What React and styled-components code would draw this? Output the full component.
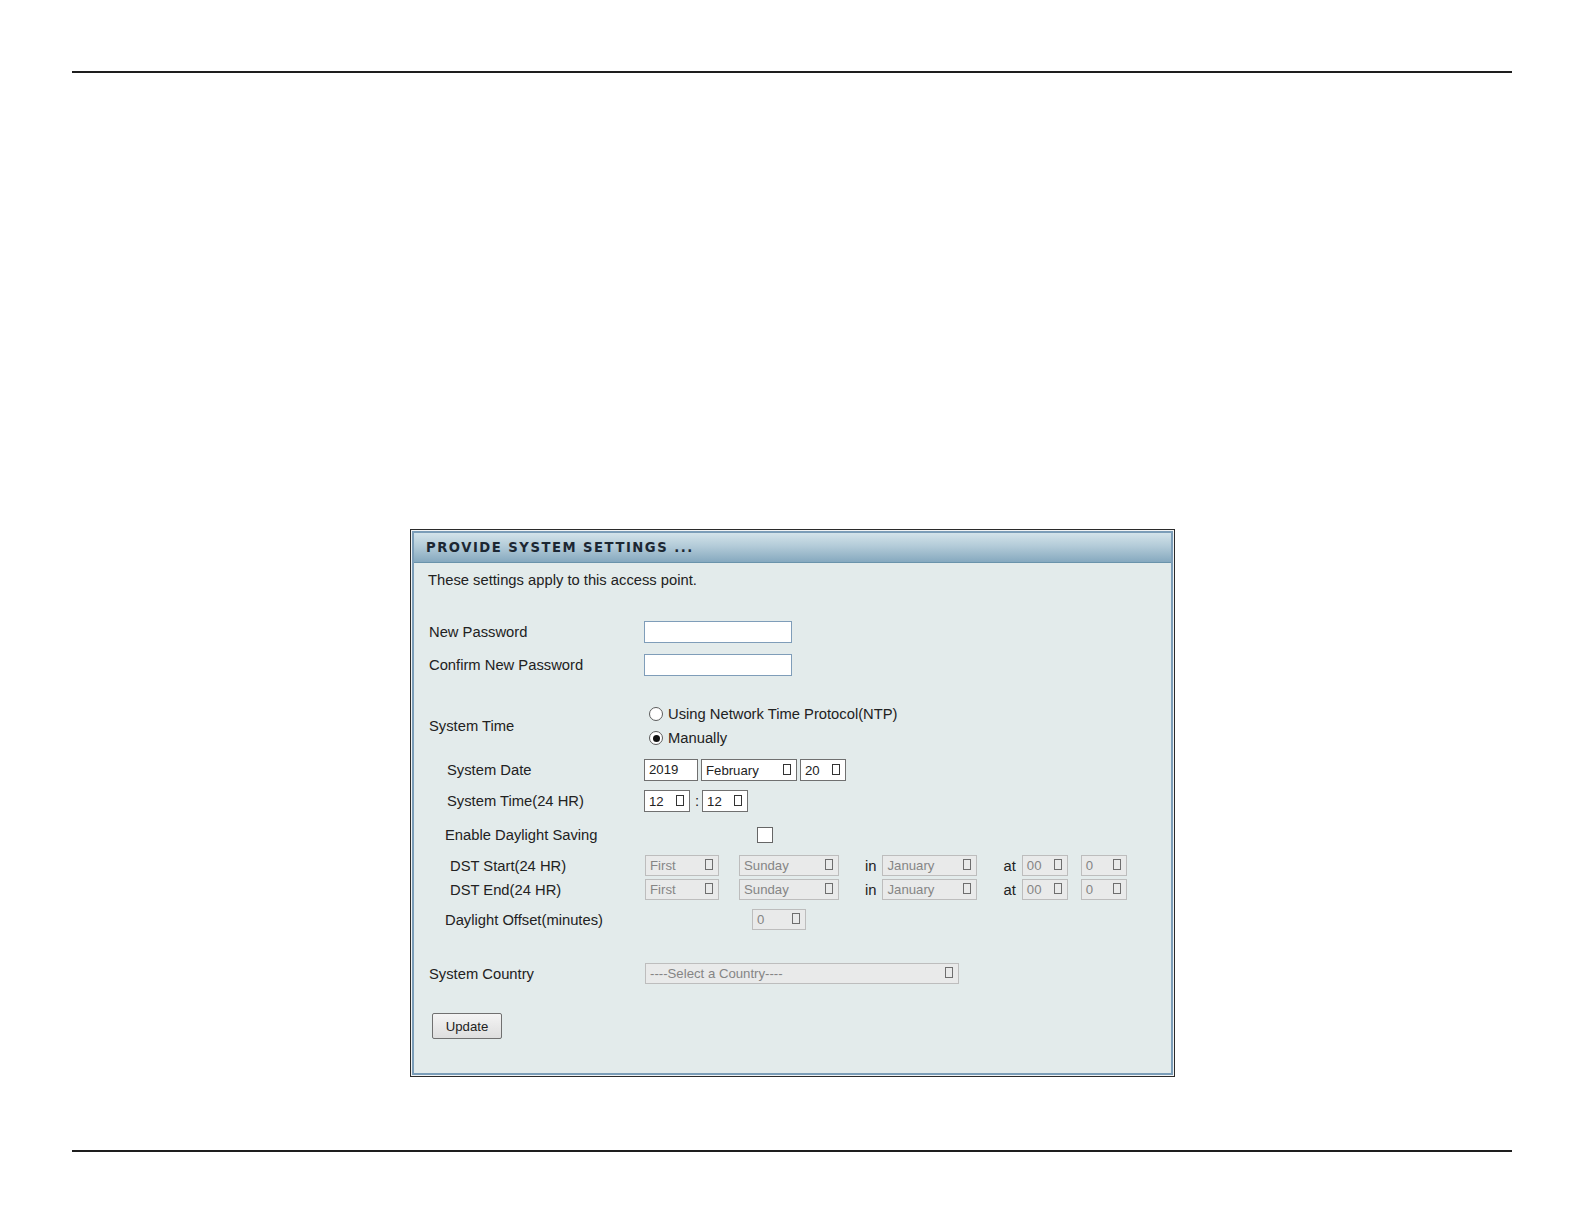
import React from "react";
import styled, { createGlobalStyle } from "styled-components";

const GlobalStyle = createGlobalStyle`
  html, body {
    margin: 0;
    padding: 0;
    background: #ffffff;
    overflow: hidden;
  }
  body {
    font-family: "Liberation Sans", Arial, sans-serif;
    color: #222222;
  }
`;

const Page = styled.div`
  padding: 71px 72px 0 72px;
  height: 1224px;
  box-sizing: border-box;
  display: flex;
  flex-direction: column;
`;

const Rule = styled.div`
  height: 2px;
  flex-shrink: 0;
  background: #1e1e1e;
  margin-top: ${(p) => p.mt || 0}px;
`;

const Panel = styled.div`
  width: 765px;
  margin: 456px 0 0 338px;
  border: 1px solid #2b2b2b;
  padding: 1px;
  background: #f2f4f5;
  box-sizing: border-box;
`;

const PanelInner = styled.div`
  border: 2px solid #7b9db8;
  background: #e3ebeb;
`;

const Header = styled.div`
  height: 29px;
  border-bottom: 1px solid #6a93ab;
  background: linear-gradient(#d3e3ea 0%, #b3cbd8 45%, #86a9bf 100%);
  display: flex;
  align-items: center;
  padding-left: 12px;
  font-family: "DejaVu Sans", Verdana, sans-serif;
  font-weight: bold;
  font-size: 13.2px;
  letter-spacing: 1.5px;
  color: #1c2733;
`;

const Body = styled.div`
  padding: 8px 15px 34px 15px;
  display: flex;
  flex-direction: column;
`;

const Intro = styled.div`
  height: 18px;
  line-height: 18px;
  font-size: 14.75px;
  margin-left: -1px;
`;

const Row = styled.div`
  display: grid;
  grid-template-columns: 215px 1fr;
  align-items: center;
  height: ${(p) => p.h || 22}px;
  margin-top: ${(p) => p.mt || 0}px;
`;

const Label = styled.div`
  font-size: 14.75px;
  padding-left: ${(p) => p.indent || 0}px;
  white-space: nowrap;
`;

const Controls = styled.div`
  display: flex;
  align-items: center;
  height: 100%;
`;

const RadioList = styled.div`
  display: flex;
  flex-direction: column;
`;

const RadioOption = styled.label`
  display: flex;
  align-items: center;
  height: 24px;
  font-size: 14.75px;
  padding-left: 5px;
  gap: 5px;
`;

const RadioDot = styled.span`
  width: 14px;
  height: 14px;
  box-sizing: border-box;
  border-radius: 50%;
  border: 1px solid #5c5c5c;
  background: #ffffff;
  display: flex;
  align-items: center;
  justify-content: center;
  &::after {
    content: "";
    width: 7px;
    height: 7px;
    border-radius: 50%;
    background: ${(p) => (p.checked ? "#111111" : "transparent")};
  }
`;

const TextInput = styled.div`
  width: ${(p) => p.w}px;
  height: 22px;
  box-sizing: border-box;
  border: 1px solid ${(p) => (p.blue ? "#7f9db9" : "#707070")};
  background: #ffffff;
  font-size: 13.2px;
  line-height: 20px;
  padding-left: 4px;
  margin-left: ${(p) => p.ml || 0}px;
`;

const Select = styled.div`
  width: ${(p) => p.w}px;
  height: ${(p) => (p.disabled ? 21 : 22)}px;
  box-sizing: border-box;
  margin-left: ${(p) => p.ml || 0}px;
  border: 1px solid ${(p) => (p.disabled ? "#bdbdbd" : "#707070")};
  background: ${(p) => (p.disabled ? "#e9eaea" : "#ffffff")};
  color: ${(p) => (p.disabled ? "#858585" : "#222222")};
  font-size: 13.2px;
  display: flex;
  align-items: center;
  justify-content: space-between;
  padding: 0 5px 0 4px;
`;

const Arrow = styled.span`
  width: 8px;
  height: 11px;
  box-sizing: border-box;
  border: 1.5px solid ${(p) => (p.disabled ? "#6e6e6e" : "#333333")};
  margin-bottom: 2px;
`;

const Word = styled.span`
  font-size: 14.75px;
  margin-left: ${(p) => p.ml || 0}px;
`;

const Checkbox = styled.span`
  width: 16px;
  height: 16px;
  box-sizing: border-box;
  border: 1px solid #666666;
  background: #ffffff;
  margin-left: ${(p) => p.ml || 0}px;
`;

const Button = styled.button`
  width: 70px;
  height: 26px;
  margin: 29px 0 0 3px;
  border: 1px solid #707070;
  border-radius: 2px;
  background: linear-gradient(#f4f4f4, #dedede);
  font-family: "Liberation Sans", Arial, sans-serif;
  font-size: 13.2px;
  color: #222222;
  padding: 0;
  align-self: flex-start;
`;

const Dropdown = ({ w, ml, disabled, children }) => (
  <Select w={w} ml={ml} disabled={disabled}>
    <span>{children}</span>
    <Arrow disabled={disabled} />
  </Select>
);

const DstControls = () => (
  <Controls>
    <Dropdown w={74} ml={1} disabled>First</Dropdown>
    <Dropdown w={100} ml={20} disabled>Sunday</Dropdown>
    <Word ml={26}>in</Word>
    <Dropdown w={95} ml={6} disabled>January</Dropdown>
    <Word ml={26}>at</Word>
    <Dropdown w={46} ml={6} disabled>00</Dropdown>
    <Dropdown w={46} ml={13} disabled>0</Dropdown>
  </Controls>
);

export default function App() {
  return (
    <>
      <GlobalStyle />
      <Page>
        <Rule />
        <Panel>
          <PanelInner>
            <Header>PROVIDE SYSTEM SETTINGS ...</Header>
            <Body>
              <Intro>These settings apply to this access point.</Intro>

              <Row mt={32}>
                <Label>New Password</Label>
                <Controls>
                  <TextInput w={148} blue />
                </Controls>
              </Row>
              <Row mt={11}>
                <Label>Confirm New Password</Label>
                <Controls>
                  <TextInput w={148} blue />
                </Controls>
              </Row>

              <Row mt={26} h={48}>
                <Label>System Time</Label>
                <RadioList>
                  <RadioOption>
                    <RadioDot />
                    Using Network Time Protocol(NTP)
                  </RadioOption>
                  <RadioOption>
                    <RadioDot checked />
                    Manually
                  </RadioOption>
                </RadioList>
              </Row>

              <Row mt={9}>
                <Label indent={18}>System Date</Label>
                <Controls>
                  <TextInput w={54}>2019</TextInput>
                  <Dropdown w={96} ml={3}>February</Dropdown>
                  <Dropdown w={46} ml={3}>20</Dropdown>
                </Controls>
              </Row>
              <Row mt={9}>
                <Label indent={18}>System Time(24 HR)</Label>
                <Controls>
                  <Dropdown w={46}>12</Dropdown>
                  <Word ml={5}>:</Word>
                  <Dropdown w={46} ml={3}>12</Dropdown>
                </Controls>
              </Row>

              <Row mt={12}>
                <Label indent={16}>Enable Daylight Saving</Label>
                <Controls>
                  <Checkbox ml={113} />
                </Controls>
              </Row>
              <Row mt={9} h={21}>
                <Label indent={21}>DST Start(24 HR)</Label>
                <DstControls />
              </Row>
              <Row mt={3} h={21}>
                <Label indent={21}>DST End(24 HR)</Label>
                <DstControls />
              </Row>
              <Row mt={9} h={21}>
                <Label indent={16}>Daylight Offset(minutes)</Label>
                <Controls>
                  <Dropdown w={54} ml={108} disabled>0</Dropdown>
                </Controls>
              </Row>

              <Row mt={33} h={21}>
                <Label>System Country</Label>
                <Controls>
                  <Dropdown w={314} ml={1} disabled>----Select a Country----</Dropdown>
                </Controls>
              </Row>

              <Button>Update</Button>
            </Body>
          </PanelInner>
        </Panel>
        <Rule mt={73} />
      </Page>
    </>
  );
}
